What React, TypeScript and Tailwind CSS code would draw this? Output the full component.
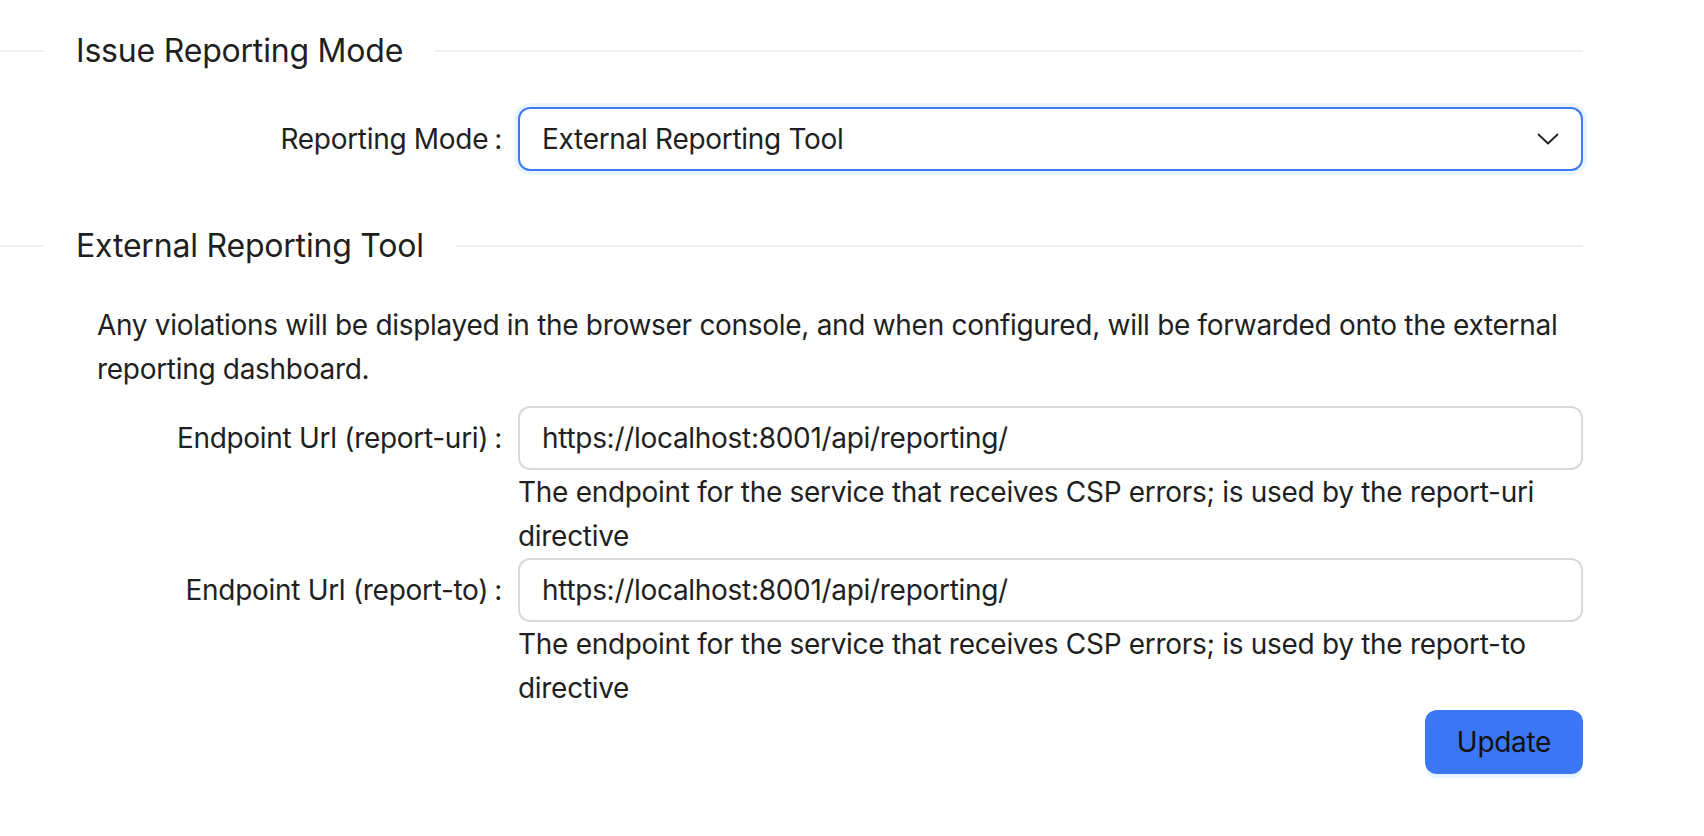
import type { ReactNode } from "react";

function Divider({ title, className = "" }: { title: string; className?: string }) {
  return (
    <div className={`flex h-[48px] items-center ${className}`}>
      <div className="h-[2px] w-[44px] bg-[#efefef]" />
      <span className="px-[32px] text-[32px] font-normal leading-[48px] tracking-[-0.2px]">{title}</span>
      <div className="h-[2px] flex-1 bg-[#efefef]" />
    </div>
  );
}

function FormRow({ label, children, className = "" }: { label: string; children: ReactNode; className?: string }) {
  return (
    <div className={`flex ${className}`}>
      <div className="flex h-[64px] w-[518px] shrink-0 items-center justify-end pr-[16px]">
        <span>{label}</span>
        <span className="ml-[6px]">:</span>
      </div>
      <div className="min-w-0 flex-1">{children}</div>
    </div>
  );
}

function TextField({ value }: { value: string }) {
  return (
    <div className="flex h-[64px] items-center rounded-[12px] border-2 border-[#d9d9d9] bg-white px-[22px]">
      {value}
    </div>
  );
}

export default function App() {
  return (
    <div className="min-h-screen bg-white font-['Inter','Noto_Sans',sans-serif] text-[28px] leading-[44px] tracking-[-0.3px] text-[#1f1f1f]">
      <div className="w-[1583px] pt-[27px]">
        <Divider title="Issue Reporting Mode" />

        <FormRow label="Reporting Mode" className="mt-[32px]">
          <div className="flex h-[64px] items-center justify-between rounded-[12px] border-2 border-[#3b7cf6] bg-white pl-[22px] pr-[22px] ring-4 ring-[#ebf3ff]">
            <span>External Reporting Tool</span>
            <svg width="22" height="12" viewBox="0 0 22 12" fill="none">
              <path d="M1.5 1.5 L11 10.5 L20.5 1.5" stroke="#1f1f1f" strokeWidth="1.8" strokeLinecap="round" strokeLinejoin="round" />
            </svg>
          </div>
        </FormRow>

        <Divider title="External Reporting Tool" className="mt-[51px]" />

        <p className="mt-[33px] pl-[97px]">
          Any violations will be displayed in the browser console, and when configured, will be forwarded onto the external
          reporting dashboard.
        </p>

        <FormRow label="Endpoint Url (report-uri)" className="mt-[15px]">
          <TextField value="https://localhost:8001/api/reporting/" />
          <p>The endpoint for the service that receives CSP errors; is used by the report-uri directive</p>
        </FormRow>

        <FormRow label="Endpoint Url (report-to)">
          <TextField value="https://localhost:8001/api/reporting/" />
          <p>The endpoint for the service that receives CSP errors; is used by the report-to directive</p>
        </FormRow>

        <div className="flex justify-end">
          <button className="h-[64px] w-[158px] rounded-[12px] bg-[#3b77f5] text-[#111] shadow-[0_4px_0_rgba(5,145,255,0.1)]">
            Update
          </button>
        </div>
      </div>
    </div>
  );
}
